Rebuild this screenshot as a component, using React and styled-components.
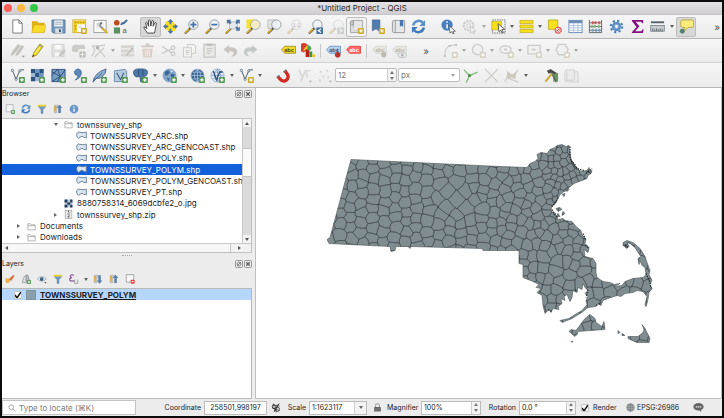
import React from "react";
import styled, { createGlobalStyle, css } from "styled-components";

const GlobalStyle = createGlobalStyle`
  *, *::before, *::after { box-sizing: border-box; }
  body { margin: 0; background: #000; }
  button, input, select { font: inherit; color: inherit; margin: 0; }
`;

/* ---------- icon drawings (16 x 16 grid) ---------- */

const NAVY = "#2c5480";
const PALE = "#cbccc9";

const plus = (fill = "#579a58", x = 9.5, y = 9.5) => (
  <>
    <rect x={x} y={y} width="6.4" height="6.4" rx="1" fill={fill} />
    <path d={`M${x + 3.2} ${y + 1.3}v3.8M${x + 1.3} ${y + 3.2}h3.8`} stroke="#fff" strokeWidth="1.300" />
  </>
);
const star = (fill = "#cba92b", x = 9.5, y = 9.5) => (
  <>
    <rect x={x} y={y} width="6.4" height="6.4" rx="1" fill={fill} />
    <path
      d={`M${x + 3.2} ${y + 1}v4.4M${x + 1} ${y + 3.2}h4.4M${x + 1.7} ${y + 1.7}l3 3M${x + 4.7} ${y + 1.7}l-3 3`}
      stroke="#fff"
      strokeWidth=".8"
    />
  </>
);
const lens = (
  <>
    <path d="M1 15.500l6-6" stroke="#454545" strokeWidth="2.200" />
    <path d="M1 15l4.400-4.400" stroke="#e5b928" strokeWidth="1.600" />
    <circle cx="10" cy="6" r="5" fill="#eef2f4" fillOpacity=".85" stroke="#8c9194" strokeWidth=".9" />
  </>
);
const vector = (c) => (
  <>
    <path d="M2.500 2.500l4 9.500 4-9.500q2-1 4.500-.5" fill="none" stroke={c} strokeWidth=".9" />
    <circle cx="2.500" cy="2.500" r="1.200" fill="#fff" stroke={c} strokeWidth=".7" />
    <circle cx="10.500" cy="3" r="1.200" fill="#fff" stroke={c} strokeWidth=".7" />
    <circle cx="6.500" cy="12" r="1.200" fill="#fff" stroke={c} strokeWidth=".7" />
  </>
);
const refresh = (
  <>
    <path d="M2.300 7a6 6 0 0 1 10.400-3" fill="none" stroke="#5b90cb" strokeWidth="2.600" />
    <path d="M15 1v6.500H8.800z" fill="#5b90cb" />
    <path d="M13.700 9a6 6 0 0 1-10.400 3" fill="none" stroke="#4179ba" strokeWidth="2.600" />
    <path d="M1 15V8.500h6.200z" fill="#4179ba" />
  </>
);
const funnel = (
  <>
    <path d="M2 4h12L9.500 9v6h-3V9z" fill="#6f9bc8" stroke="#4c6f93" strokeWidth=".7" />
    <rect x="1" y="1" width="14" height="3" rx="1" fill="#e9d130" />
  </>
);
const globe = (fill, line) => (
  <>
    <circle cx="8" cy="8" r="7" fill={fill} stroke={line} strokeWidth=".7" />
    <path d="M1.500 8h13M8 1.200v13.600M2.700 4.500h10.600M2.700 11.500h10.600M8 1.200q-7 6.800 0 13.600M8 1.200q7 6.800 0 13.600" fill="none" stroke={line} strokeWidth=".8" />
  </>
);
const label = (fill, line, ink) => (
  <>
    <path d="M4 3.500h11.500v7.500H4L.5 7.200z" fill={fill} stroke={line} strokeWidth=".8" />
    <text x="3.400" y="9.500" fontSize="6" fontWeight="700" fontFamily="Liberation Sans, sans-serif" fill={ink}>abc</text>
  </>
);

const ICONS = {
  newDoc: <path d="M3 1h6.500l3.500 3.500V15H3zM9.500 1v3.500H13" fill="#fff" stroke="#6c6c6c" strokeWidth=".9" />,
  folderOpen: (
    <>
      <path d="M1 2.500h5.500L8 4h6.500v10.500H1z" fill="#dcaf12" />
      <path d="M3.500 6.500H15.800L14 14.500H.8z" fill="#f9d92b" stroke="#dbb318" strokeWidth=".6" />
    </>
  ),
  save: (
    <>
      <path d="M1 1h14v14H2.500L1 13.500z" fill="#7396bd" stroke="#56738f" strokeWidth=".8" />
      <rect x="3.500" y="1.500" width="9" height="6.500" fill="#eef1f4" />
      <path d="M4.500 3.500h7M4.500 5.500h7" stroke="#9aa6b2" strokeWidth=".9" />
      <rect x="4.500" y="10" width="7.500" height="5" fill="#d8dde2" />
      <rect x="8.500" y="11" width="2" height="3" fill="#43566a" />
    </>
  ),
  newLayout: (
    <>
      <rect x="1" y="1" width="13.500" height="13.500" fill="#fff" stroke="#c8a92a" />
      <path d="M1.500 1.500h13v4H5.500v9h-4z" fill="#f0cb2c" />
      <path d="M6 3.500h1M9 3.500h1M12 3.500h1M3.500 3v1M3.500 7v1M3.500 10v1" stroke="#7c6919" />
      <path d="M7 7h4v3H7z" fill="#e2e2e2" />
      {star()}
    </>
  ),
  layoutManager: (
    <>
      <rect x="1" y="1.500" width="13" height="13" fill="#fff" stroke="#9a9d9f" />
      <path d="M3 3.500h9v7H3z" fill="#f0f1f2" />
      <path d="M5 5l7 7" stroke="#8f9496" strokeWidth="2" />
      <path d="M10 10l5.500 5" stroke="#d9b631" strokeWidth="2.400" />
      <path d="M9 3l1 1.500L8 7 6 5z" fill="#6d7275" />
      <path d="M3.500 5.500l3-2 1.500 2-2.500 2z" fill="#c9cdd0" />
    </>
  ),
  styleManager: (
    <>
      <circle cx="4" cy="4" r="3" fill="#c04c20" />
      <rect x="1" y="9" width="6.500" height="6.500" fill="#5a9162" />
      <path d="M9 6.500q0-2.500 2.500-2l3.500-3.500" fill="none" stroke="#436f9f" strokeWidth="2.200" />
      <text x="10" y="15" fontSize="8" fontFamily="Liberation Sans, sans-serif" fill="#555">a</text>
    </>
  ),
  hand: (
    <path
      d="M4.800 15L1 9.600q-.5-1.500 1-1.100l2.200 1.800L2.800 4q.6-1.400 1.700 0l1.500 3.800L5.800 1.500q.9-1.200 1.800 0l.7 6L9.500 2q1-1 1.700.3l-.4 5.400L12.800 4q1.200-.6 1.500.6l-1.200 6.400-.9 4z"
      fill="#fff" stroke="#333" strokeWidth=".9"
    />
  ),
  panSelection: (
    <>
      <path d="M2.500 2.500h9v9h-9z" fill="#f6df26" />
      <path d="M5 5h8v8H5z" fill="#f6df26" />
      <path d="M8 0l3 3.300H9v2.200H7V3.300H5zM8 16l3-3.300H9v-2.200H7v2.200H5zM0 8l3.300-3v2h2.200v2H3.300v2zM16 8l-3.300-3v2h-2.200v2h2.200v2z" fill="#4b739f" />
    </>
  ),
  zoomIn: <>{lens}<path d="M10 2.800v6.400M6.800 6h6.400" stroke="#3f74b0" strokeWidth="1.800" /></>,
  zoomOut: <>{lens}<path d="M6.800 6h6.400" stroke="#3f74b0" strokeWidth="1.800" /></>,
  zoomFull: (
    <>
      <path d="M1 15.500l6-6" stroke="#454545" strokeWidth="2" />
      <path d="M1 15l4.400-4.400" stroke="#e5b928" strokeWidth="1.500" />
      <rect x="5" y="3" width="8" height="7.500" fill="#e3e8ec" stroke="#a5abb0" strokeWidth=".7" />
      <path d="M2 .8h4.500L5.500 2.300 7 4 5.300 5.500 3.500 4 2 5.200zM15.800.8h-4.500l1.200 1.500L11 4l1.500 1.500L14.300 4l1.500 1.200zM15.800 12.500h-4.500l1.200-1.500L11 9.300l1.500-1.500 1.800 1.500 1.500-1.200z" fill="#4d739d" />
    </>
  ),
  zoomSelection: <><path d="M.5.500h8v9.500h-8z" fill="#f5e02a" />{lens}<circle cx="10" cy="6" r="4.500" fill="#f2ecc4" /></>,
  zoomLayer: <><path d="M1 1h8v9H1z" fill="#e3e4e4" stroke="#aaa" strokeWidth=".7" />{lens}</>,
  zoomNative: (
    <g opacity=".32">
      {lens}
      <text x="6" y="8.500" fontSize="6" fontFamily="Liberation Sans, sans-serif" fill="#333">1:1</text>
    </g>
  ),
  zoomLast: <>{lens}<path d="M9 9h7v7H9z" fill="#47719d" /><path d="M14 10.500l-3 2 3 2" fill="none" stroke="#fff" strokeWidth="1.300" /></>,
  zoomNext: <g opacity=".28">{lens}<path d="M9 9h7v7H9z" fill="#777" /><path d="M11 10.500l3 2-3 2" fill="none" stroke="#fff" strokeWidth="1.300" /></g>,
  newMapView: (
    <>
      <path d="M4.500 1.500h10v11h-10z" fill="#e5e6e5" stroke="#8f9394" strokeWidth=".8" />
      <path d="M4.500 1.500q-3.500 0-3.500 3t3.500 2z" fill="#c4c7c8" stroke="#8f9394" strokeWidth=".8" />
      <path d="M1.500 6v8.500h9" fill="#dcdedd" stroke="#8f9394" strokeWidth=".8" />
      {star()}
    </>
  ),
  newBookmark: <><path d="M2.500 1h8v12.500l-4-3-4 2z" fill="#507caf" stroke="#3c628c" strokeWidth=".7" />{star()}</>,
  bookmarks: (
    <>
      <path d="M1.500 3q0-1.500 2-1.500h11v13H3.500q-2 0-2-1.500z" fill="#e6e8e8" stroke="#8c9091" strokeWidth=".9" />
      <path d="M4.500 1.500v13" stroke="#8c9091" strokeWidth=".9" />
      <path d="M9.500 1H13v7.500L11.200 7 9.500 8.500z" fill="#4876ab" />
    </>
  ),
  refresh,
  identify: (
    <>
      <circle cx="6.500" cy="6.500" r="6" fill="#4a7fbe" />
      <path d="M6.500 5.500v4.500M6.500 2.500v1.600" stroke="#fff" strokeWidth="1.600" />
      <path d="M8.500 7l6.800 6-2.600.2 1.200 2.300-1.200.5-1.200-2.600-2 1.400z" fill="#fff" stroke="#333" strokeWidth=".7" />
    </>
  ),
  action: (
    <g opacity=".45">
      <circle cx="7" cy="7" r="5" fill="none" stroke="#a1a3a2" strokeWidth="2.400" strokeDasharray="2.400 1" />
      <circle cx="7" cy="7" r="2" fill="none" stroke="#a1a3a2" />
      <path d="M9 8l5.800 5-2.600.2 1.200 2.300-1.200.5-1.200-2.600-2 1.400z" fill="#fff" stroke="#777" strokeWidth=".7" />
    </g>
  ),
  select: (
    <>
      <rect x="1.500" y="1" width="13.500" height="14" fill="none" stroke="#555" strokeDasharray="1.500 1" strokeWidth=".9" />
      <path d="M.8 2.500h10.500v9H.8z" fill="#f6df15" stroke="#a99a1d" strokeWidth=".5" />
      <path d="M7.500 5l7 6-2.800.3 1.500 3-1.300.6-1.500-3-2 1.600z" fill="#fff" stroke="#333" strokeWidth=".8" />
    </>
  ),
  selectForm: <path d="M1 1.500h14v3.200H1zM1 6.400h14v3.200H1zM1 11.300h14v3.200H1z" fill="#f8e11a" stroke="#b8a21c" strokeWidth=".7" />,
  deselect: (
    <>
      <path d="M1.500 1h10v10h-10z" fill="#f8e11a" stroke="#a99315" strokeWidth=".7" />
      <circle cx="12" cy="12" r="3.800" fill="#df5f5f" />
      <circle cx="12" cy="12" r="2" fill="none" stroke="#fff" strokeWidth=".8" />
      <path d="M9.500 9.500l5 5" stroke="#fff" strokeWidth=".8" />
    </>
  ),
  attributes: (
    <>
      <rect x="1" y="1.500" width="14" height="13" fill="#fff" stroke="#668cb8" />
      <path d="M1 1.500h14v3H1z" fill="#668cb8" />
      <path d="M2 7h12M2 9.500h12M2 12h12M6 4v10.500M10.500 4v10.500" stroke="#9db7d4" strokeWidth=".8" />
    </>
  ),
  abacus: (
    <>
      <path d="M1.500 1v13.500h13V1M1.500 4h13M1.500 8h13M1.500 12h13" fill="none" stroke="#62696d" />
      <path d="M4 2.500h2v3H4zM7 2.500h2v3H7zM11 2.500h2v3h-2z" fill="#d25454" />
      <path d="M3 6.500h2v3H3zM6 6.500h2v3H6zM10.500 6.500h2v3h-2z" fill="#8dbb86" />
      <path d="M4 10.500h2v3H4zM7.500 10.500h2v3h-2zM11 10.500h2v3h-2z" fill="#7d9ec5" />
    </>
  ),
  gear: (
    <>
      <circle cx="8" cy="8" r="6" fill="none" stroke="#4c83c0" strokeWidth="2.400" strokeDasharray="2.300 2.410" />
      <circle cx="8" cy="8" r="4" fill="#7ba6d4" stroke="#4c83c0" strokeWidth="1.600" />
      <circle cx="8" cy="8" r="1.500" fill="#fff" />
    </>
  ),
  sigma: <path d="M2 1h12v3.500h-1L12 3H6l4 4.800L5.500 13H12l1.500-2h1l-.7 4H2v-1l5-5.500L2 2z" fill="#860f83" />,
  ruler: (
    <>
      <path d="M1 3.500h14" stroke="#54606c" strokeWidth="2" />
      <rect x=".8" y="7" width="14.400" height="6" fill="#c6ccd0" stroke="#6d767c" strokeWidth=".8" />
      <path d="M3 13v-3M5 13v-2M7 13v-3M9 13v-2M11 13v-3M13 13v-2" stroke="#4c5459" strokeWidth=".8" />
    </>
  ),
  mapTips: (
    <>
      <path d="M4 1h9.500q2.200 0 2.200 2v4q0 2-2.200 2H10l-5 4 1-4H4Q1.800 9 1.800 7V3q0-2 2.200-2z" fill="#f9ec7d" stroke="#b0a03a" strokeWidth=".9" />
      <circle cx="3.500" cy="13" r="2.600" fill="#56875b" />
      <path d="M1.500 13l2-2 1 4z" fill="#4c77a7" />
    </>
  ),

  pencils: <><path d="M.5 14L2 9.500 8.500 1l3 2-7 9zM5.500 14L7 10l5.500-8 2.500 2-6 8.500z" fill="#c4c2bf" /><path d="M12.500 13.500h3.500l-1.700 2z" fill="#999" /></>,
  pencil: (
    <>
      <path d="M2.500 15L4 10.500 10.500 1 14 3.500l-6.500 9z" fill="#f0db27" stroke="#907f20" strokeWidth=".8" />
      <path d="M2.500 15l.8-2.500 1.500 1.100z" fill="#333" />
      <path d="M5.500 11.500L12 2.500" stroke="#fbf4a0" />
      <path d="M9.800 2.200l3.500 2.500" stroke="#9b9b9b" strokeWidth="1.200" />
    </>
  ),
  saveEdits: <g opacity=".75"><path d="M1 1.500h13v13H1z" fill="#d9d9d7" stroke={PALE} /><path d="M4 2h7v5H4zM4 10h6v4.500H4z" fill="#fafafa" /><path d="M8 14.500l1-3 5-5 2 2-5 5z" fill="#b9bab8" /></g>,
  addPolygon: <g fill={PALE}><path d="M1 8q-1-6 4-6.500 5 1 8 0 3 2 2 5l-6 0-2 3-5 0z" /><rect x="9" y="9" width="6.500" height="6.500" rx="1" fill="#b9bbb7" /><path d="M12.200 10v4.500M10 12.200h4.500" stroke="#fff" /></g>,
  vertexTool: <><path d="M1 3h9l5-1M2 3l2 5-3 6M7 5l8 10M14 5L4 15" fill="none" stroke={PALE} strokeWidth="1.400" /><circle cx="7" cy="5" r="2" fill="#b6b7b5" /></>,
  multiEdit: <g opacity=".85"><path d="M1 2.500h14v3H1zM1 7h14v3H1zM1 11.500h14v3H1z" fill="#d2d0cc" /><path d="M5 14l8-10 2 1.500-8 9z" fill="#b3b3af" stroke="#f3f3f2" strokeWidth=".5" /></g>,
  trash: <g opacity=".9"><path d="M1.500 3.500h13M6 1.500h4" stroke="#cdc0bd" strokeWidth="1.800" /><path d="M2.500 6h11l-1 9.500h-9z" fill="#d8cbc8" /><path d="M6 7v7M8 7v7M10 7v7" stroke="#f1eceb" /></g>,
  scissors: <><path d="M1 3.500l10 7M1 11l11-5" stroke="#c8c9c7" strokeWidth="1.300" /><circle cx="13" cy="5" r="2" fill="none" stroke="#c8c9c7" strokeWidth="1.300" /><circle cx="12.800" cy="11.500" r="2" fill="none" stroke="#c8c9c7" strokeWidth="1.300" /></>,
  copy: <g fill="#f3f3f2" stroke={PALE} strokeWidth="1.100"><path d="M6 1.500h6l2.500 2V11H6z" /><path d="M1.500 5H10v10H1.500zM4 8h4M4 10h4M4 12h3" /></g>,
  paste: <><path d="M2 1.500h12V15H2z" fill="#e9e9e7" stroke="#c3c4c2" strokeWidth="1.200" /><path d="M5 .8h6V3H5z" fill="#b9bab8" /><path d="M5 6h6M5 8.500h6M5 11h4" stroke="#c3c4c2" /></>,
  undo: <path d="M6.500 2L.5 7l6 4.500V9q5-.5 5 2-.5 2.500-3 3.500 7-.5 6.500-5.500-.5-5-8.500-4.500z" fill="#c9c4bf" />,
  redo: <path d="M9.500 2l6 5-6 4.500V9q-5-.5-5 2 .5 2.500 3 3.500Q.5 14 1 9q.5-5 8.500-4.500z" fill="#c6cac6" />,
  labelYellow: label("#f5dc2b", "#8f8021", "#4a4208"),
  diagram: (
    <>
      <path d="M8 6a5 5 0 1 0-5 4z" fill="#d93c31" />
      <path d="M2 9q1-4 5-7l2 3z" fill="#e9c72d" />
      <path d="M5 7h4v8H5z" fill="#b9201c" />
      <path d="M9 9h3v6H9z" fill="#3e9a42" />
      <path d="M7 2a4.500 4.500 0 0 1 4 5L7 8z" fill="#4ca147" />
      <path d="M12 12h3v3h-3z" fill="#e8c62a" />
    </>
  ),
  labelPin: <>{label("#b7d3f2", "#5c86b8", "#3d5875")}<circle cx="12.500" cy="12.500" r="3" fill="#b83232" /><path d="M12.500 9.500V6" stroke="#555" /></>,
  labelRed: label("#fa6a62", "#e03a34", "#fff"),
  labelGreyPin: <>{label("#e6e6e2", "#d0d0cb", "#b6b6b1")}<circle cx="12.500" cy="12.500" r="2.800" fill="#bcbab5" /></>,
  labelGreyEye: <>{label("#e6e6e2", "#d0d0cb", "#b6b6b1")}<ellipse cx="11" cy="13" rx="4.500" ry="2.400" fill="#eee" stroke="#b5bbc0" /><circle cx="11" cy="13" r="1.400" fill="#aab3bb" /></>,
  curve: <><path d="M2 14q0-9 5-11l7-1" fill="none" stroke={PALE} strokeWidth="1.200" /><path d="M1 13h2v2H1zM6 2h2v2H6zM13 1h2v2h-2z" fill="#bbb" />{star("#d3d0c2")}</>,
  circle: <><circle cx="7" cy="7" r="5.500" fill="#f0f0f0" stroke={PALE} strokeWidth="1.400" />{star("#d3d0c2")}</>,
  ellipse: <><ellipse cx="7" cy="7" rx="6" ry="4" fill="#f0f0f0" stroke={PALE} strokeWidth="1.400" /><circle cx="7" cy="7" r="1.500" fill={PALE} />{star("#d3d0c2")}</>,
  rectangle: <><path d="M1 2.500h13v9H1z" fill="#f0f0f0" stroke={PALE} strokeWidth="1.400" /><path d="M5 6h4v2H5z" fill={PALE} />{star("#d3d0c2")}</>,
  polygon: <><path d="M4 1.500h7l3 5.500-3 5.500H4L1 7z" fill="#f0f0f0" stroke={PALE} strokeWidth="1.400" />{star("#d3d0c2")}</>,

  addVector: <>{vector("#35495d")}{plus()}</>,
  addRaster: <><path d="M1 1h13.500v13H1z" fill="#9cb6d4" /><path d="M1 1h4.500v4.300H1zM10 1h4.500v4.300H10zM5.500 5.300H10v4.400H5.500zM1 9.700h4.500V14H1z" fill={NAVY} /><path d="M10 5.300h4.500v4.400H10zM5.500 1H10v4.300H5.500z" fill="#6d93bf" />{plus()}</>,
  addMesh: <><path d="M1 1.500h14v13H1z" fill="#789ec6" stroke={NAVY} /><path d="M1 8l6-6.500L10 9l5-7M7 14.500L10 9l5 4M1 14.500L10 9M1 4l9 5" fill="none" stroke="#234567" strokeWidth=".9" />{plus()}</>,
  addText: <><path d="M4 2a3.600 3.600 0 0 1 6 3q0 5-6.500 8Q7 9 6 8 2.500 7.500 2.500 4.500 2.500 3 4 2z" fill="#5a86b8" stroke="#345f8f" strokeWidth=".7" />{plus()}</>,
  addSpatialite: <><path d="M15 1q.5 5-5 9-3 1.500-6 1L1 15Q2.500 5 15 1z" fill="#8fb0d3" stroke="#395f88" strokeWidth=".9" /><path d="M2 14l9-9" stroke="#395f88" strokeWidth=".9" />{plus()}</>,
  addVirtual: <><path d="M1.500 3L13 1.500l1.500 2V14.500h-13z" fill="#b5cbe2" stroke="#6d8aaa" /><path d="M4 5l4 7.500L11.500 5" fill="none" stroke="#3b556f" strokeWidth="1.100" />{plus()}</>,
  addPostgis: <><path d="M.5 5q0-4 5.500-4h4q5.500 0 5.500 4-1 4-3.500 4l-1 5.500q-2 1-3 0L7.500 9Q4 10 2.500 9 .5 7 .5 5z" fill="#4e78a7" stroke="#284d76" strokeWidth=".8" /><path d="M6 2v6M10.500 2v6" stroke="#284d76" />{plus()}</>,
  addWms: <>{globe("#86a9cf", "#7d9fc4")}<path d="M2.500 4.500l4-2.500 2 3-3 3-2 0zM9.500 6l4 0.500-1 4-3-1zM5 10l3 1-1 3z" fill="#3d6896" /><path d="M9 2l3 1.500-2 1.500z" fill="#dfeaf5" />{plus()}</>,
  addWcs: <>{globe("#3c6795", "#a9c3de")}{plus()}</>,
  addWfs: <>{globe("#e3ecf6", "#7d9fc4")}<path d="M3.500 3.500l3.500 9L10.500 4l3 .5" fill="none" stroke="#2c4f78" strokeWidth="1.400" />{plus()}</>,
  newVector: <>{vector("#35495d")}{star()}</>,
  magnet: (
    <>
      <path d="M2 9l2.500 3a4.500 4.500 0 0 0 7.500-5.500L9.500 3" fill="none" stroke="#d12b24" strokeWidth="3.500" />
      <path d="M.8 10.200l2.800-2.400M8 4.400l3-2.400" stroke="#777" strokeWidth="1.800" />
    </>
  ),
  snapAll: <><path d="M2 2l4 8 3-7h5M6 10l-2 4M10 5l1 5" fill="none" stroke="#d6d6d4" strokeWidth="1.700" /><path d="M12.500 13.500h3.500l-1.700 2z" fill="#aaa" /></>,
  snapVertex: <><path d="M3 3h2v2H3zM10 2h2v2h-2zM6 8h2v2H6zM11 9h2v2h-2zM2 12h2v2H2z" fill="#d2d2d0" /><path d="M12.500 13.500h3.500l-1.700 2z" fill="#aaa" /></>,
  topology: <><path d="M1 2l6 6 8.500-3.500M7 8l-3.500 7.500" fill="none" stroke="#7fb57a" strokeWidth="1.400" /><circle cx="7" cy="8" r="1.700" fill="#4b8b49" /></>,
  intersection: <path d="M1 1l14 14M15 1L1 15" stroke={PALE} strokeWidth="1.300" />,
  tracing: <><path d="M1 15L5 5M10 9l5-7M5 11l10 4" fill="none" stroke={PALE} strokeWidth="1.300" /><path d="M3 3l5.500 4L13 4l-1 8-4-2-4 2z" fill="#cbc8bc" /></>,
  hammer: (
    <>
      <path d="M10 4l5 1.500V15l-3-2-2 2.500z" fill="#6b9263" />
      <path d="M8 5l5 10" stroke="#55694f" strokeWidth="1.600" />
      <path d="M1.500 14.500L8.500 6" stroke="#c9a530" strokeWidth="2" />
      <path d="M3 3l4-2 6 4-2 2-3-2-3 1z" fill="#4a4d48" />
    </>
  ),
  mapGrey: <g opacity=".45"><path d="M3 2h8v11H3zM11 4h4v11H5" fill="#e6e6e5" stroke="#a9aaa9" /><path d="M3 2Q1 2 1 4v10h4" fill="none" stroke="#a9aaa9" /></g>,

  addItem: <><path d="M2 1h11v11.500H2z" fill="#f6f6f6" stroke="#9b9fa0" />{plus()}</>,
  funnel,
  collapse: <><path d="M2 2h6v3H2zM2 6h4v8H2z" fill="#dfe1e2" stroke="#8a8c8c" strokeWidth=".8" /><path d="M2 3h3v9H2z" fill="#e4ac36" /><path d="M10.500 1L15 6h-2.500v8.500h-4V6H6z" fill="#5a7ea8" /></>,
  expand: <><path d="M2 2h6v3H2zM2 6h4v8H2z" fill="#dfe1e2" stroke="#8a8c8c" strokeWidth=".8" /><path d="M2 3h3v9H2z" fill="#e4ac36" /><path d="M10.500 15.500l4.500-5h-2.500V2h-4v8.500H6z" fill="#5a7ea8" /></>,
  info: <><circle cx="8" cy="8" r="7" fill="#6a96c9" /><path d="M8 7v5.500M8 3.500v2" stroke="#fff" strokeWidth="2" /></>,
  brush: <><path d="M.5 6.500l6 1.500 2 4.500q-5 3-7 1z" fill="#f0a445" /><path d="M6 8l4 3 5.500-8.500-2-1z" fill="#d3703f" /><path d="M2 8l4 5" stroke="#f9d54b" strokeWidth="1.400" /></>,
  addGroup: <><path d="M2 14L5 4l4-2v12z" fill="#dcdfe0" stroke="#83898c" /><path d="M8 2h3l3 10H8z" fill="#b7bdc0" stroke="#777c80" />{plus()}</>,
  eye: <><path d="M.5 8q7-8 14.500 0-7.500 7-14.500 0z" fill="#e3ebf1" stroke="#8a95a0" /><circle cx="7.500" cy="8" r="3" fill="#3d5f82" /><path d="M11.500 13h4l-2 2z" fill="#333" /></>,
  expression: <><path d="M8 2Q2 0 2 4q0 2 3 2-4 0-4 3t7 2" fill="none" stroke="#7c4e8d" strokeWidth="1.700" /><path d="M9 9v6h5V9" fill="none" stroke="#9a9c9c" strokeWidth="1.500" /></>,
  remove: <><path d="M2 1h12v12H2z" fill="#f6f6f6" stroke="#7c8082" /><rect x="9" y="9" width="6.500" height="6.500" rx="1.500" fill="#e0403f" /><path d="M10.500 12.200h3.500" stroke="#fff" strokeWidth="1.500" /></>,
  float: <><rect x="1" y="1" width="14" height="14" rx="2" fill="none" stroke="#6a6a6a" strokeWidth="1.300" /><circle cx="8" cy="8" r="3.800" fill="none" stroke="#666" strokeWidth="1.500" /><path d="M4 12l8-8" stroke="#666" strokeWidth="1.500" /></>,
  close: <><rect x="1" y="1" width="14" height="14" rx="2" fill="none" stroke="#6a6a6a" strokeWidth="1.300" /><path d="M4.500 4.500l7 7M11.500 4.500l-7 7" stroke="#555" strokeWidth="2.200" /></>,
  folder: <path d="M1.500 14V3h5l1.500 2h6.500v9zM1.500 6.500h13" fill="#fafafa" stroke="#999" strokeWidth="1.200" />,
  polygonLayer: <path d="M2 11Q-1 4 4 3l6 1 5-1v8.500l-4-1q-2-3-5 0-3 3-4 .5z" fill="#dbe5ef" stroke="#637c96" strokeWidth="1.300" />,
  image: <><path d="M1 1h14v14H1z" fill="#b9c8d8" /><path d="M1 1h5v5H1zM11 1h4v5h-4zM6 6h5v4H6zM1 10h5v5H1zM11 10h4v5h-4z" fill="#203a58" /></>,
  zip: <><rect x="2" y="1" width="12" height="14" fill="#ececec" stroke="#8f8f8f" /><path d="M7 1.500h2v2H7zM8 4h2v2H8zM6 6h2v2H6zM8 8h2v2H8zM6.500 10.500h3v3h-3z" fill="#666" /></>,
  search: <><circle cx="6.500" cy="6.500" r="4.800" fill="none" stroke="#8a8a8a" strokeWidth="1.400" /><path d="M10 10l5 5" stroke="#8a8a8a" strokeWidth="1.500" /></>,
  extents: <><path d="M2 3l12 2M2 8l12 4M4 1l2 12M10 2L8 15" stroke="#555" strokeWidth="1.200" /><circle cx="5" cy="6" r="3" fill="none" stroke="#333" strokeWidth="1.500" /><circle cx="10" cy="10" r="3.500" fill="none" stroke="#444" strokeWidth="1.500" /><path d="M13 1L5 14" stroke="#333" strokeWidth="1.500" /></>,
  lock: <><path d="M4.500 8V5a3.500 3.500 0 0 1 7 0v3" fill="none" stroke="#9b9b9b" strokeWidth="1.800" /><rect x="2" y="7" width="12" height="8" rx="1" fill="#666" /><path d="M2.500 10h11M2.500 12.500h11" stroke="#888" /></>,
  globeGrey: globe("#b2b5b6", "#666a6c"),
  bubble: <><ellipse cx="8" cy="7" rx="7.500" ry="5.500" fill="#666" /><path d="M8 11l4 4-.5-5z" fill="#666" /><path d="M4 7h2M7 7h2M10 7h2" stroke="#eee" strokeWidth="1.700" /></>,
};

const Svg = styled.svg`
  display: block;
  flex: none;
  width: ${(p) => p.$size}px;
  height: ${(p) => p.$size}px;
`;
const Icon = ({ name, size = 15 }) => (
  <Svg $size={size} viewBox="0 0 16 16" aria-hidden="true">{ICONS[name]}</Svg>
);

/* ---------- window ---------- */

const Window = styled.div`
  min-height: 100vh;
  display: flex;
  flex-direction: column;
  border: 2px solid #0b0b0b;
  background: #ececec;
  color: #1c1c1c;
  font-family: Inter, "Liberation Sans", sans-serif;
  font-size: 8px;
  line-height: 10px;
`;
const TitleBar = styled.header`
  height: 13px;
  flex: none;
  display: grid;
  grid-template-columns: 1fr auto 1fr;
  align-items: center;
  background: linear-gradient(#e4e2e4, #d0ced0);
  border-bottom: 1px solid #c6c4c6;
`;
const Title = styled.h1`
  margin: 0;
  font-size: 8px;
  line-height: 12px;
  font-weight: 400;
  color: #2d2d2d;
`;
const Lights = styled.div`
  display: flex;
  gap: 5px;
  padding-left: 2px;
`;
const Light = styled.button`
  width: 8px;
  height: 8px;
  padding: 0;
  border: 0;
  border-radius: 50%;
  background: ${(p) => p.$color};
`;

const Toolbar = styled.div`
  height: ${(p) => (p.$tall ? 25 : 24)}px;
  flex: none;
  display: flex;
  align-items: center;
  background: linear-gradient(#f6f6f6, #ebebeb);
  border-bottom: 1px solid ${(p) => (p.$strong ? "#b5b5b5" : "#d2d2d2")};
`;
const Handle = styled.span`
  width: ${(p) => p.$w || 9}px;
  height: 16px;
  flex: none;
  background: radial-gradient(circle, #c2c2c2 35%, transparent 45%) center / 2px 2px;
  background-clip: content-box;
  padding: 0 ${(p) => (p.$w === 5 ? "1px" : "3px")};
`;
const Group = styled.div`
  width: ${(p) => p.$w}px;
  flex: none;
  display: flex;
`;
const Tool = styled.button`
  flex: 1;
  height: 20px;
  min-width: 0;
  padding: 0;
  display: grid;
  place-items: center;
  border: 1px solid transparent;
  border-radius: 2px;
  background: none;
  ${(p) => p.$on && css`
    background: ${p.$on === "light" ? "#f3f3f3" : "#d7d7d7"};
    border-color: #bcbcbc;
  `}
`;
const MenuButton = styled.button`
  width: 8px;
  height: 16px;
  flex: none;
  padding: 0;
  display: grid;
  place-items: center;
  border: 0;
  background: none;
  &::after {
    content: "";
    border: 2px solid transparent;
    border-top: 3px solid ${(p) => (p.$off ? "#a5a5a5" : "#606060")};
    border-bottom: 0;
  }
`;
const Divider = styled.span`
  width: 1px;
  height: 14px;
  margin: 0 2px 0 1px;
  flex: none;
  background: #c9c9c9;
`;
const Gap = styled.span`
  width: ${(p) => p.$w}px;
  flex: none;
`;
const Push = styled.span`
  flex: 1;
`;
const More = styled.button`
  width: 21px;
  padding: 0 2px 0 0;
  border: 0;
  background: none;
  text-align: right;
  font-size: 10px;
  color: #555;
`;

const Tools = ({ w, items, on = {} }) => (
  <Group $w={w}>
    {items.map((n) => (
      <Tool key={n} $on={on[n]} aria-label={n}><Icon name={n} /></Tool>
    ))}
  </Group>
);
const Split = ({ name, off }) => (
  <>
    <Tools w={20} items={[name]} />
    <MenuButton $off={off} aria-label={`${name} menu`} />
  </>
);

/* ---------- fields ---------- */

const Field = styled.div`
  width: ${(p) => p.$w}px;
  height: 14px;
  flex: none;
  display: flex;
  align-items: stretch;
  background: #fff;
  border: 1px solid #bdbdbd;
  border-radius: ${(p) => (p.$muted ? 2 : 0)}px;
  color: ${(p) => (p.$muted ? "#777" : "#1c1c1c")};
`;
const TextInput = styled.input`
  flex: 1;
  min-width: 0;
  width: 100%;
  padding: 0 2px;
  border: 0;
  outline: 0;
  background: none;
  text-align: ${(p) => (p.$center ? "center" : "left")};
  &::placeholder { color: #7b7b7b; opacity: 1; }
`;
const Steps = styled.div`
  width: 9px;
  flex: none;
  display: flex;
  flex-direction: column;
  border-left: 1px solid #cfcfcf;
  background: #f3f3f3;
`;
const Step = styled.button`
  flex: 1;
  padding: 0;
  display: grid;
  place-items: center;
  border: 0;
  background: none;
  &::after {
    content: "";
    border: 2px solid transparent;
    ${(p) => (p.$up ? "border-bottom: 3px solid #777; border-top: 0;" : "border-top: 3px solid #777; border-bottom: 0;")}
  }
`;
const Select = styled.select`
  flex: 1;
  min-width: 0;
  padding: 0 2px;
  border: 0;
  appearance: none;
  background: none;
`;
const Caret = styled.span`
  width: 12px;
  flex: none;
  display: grid;
  place-items: center;
  pointer-events: none;
  border-left: ${(p) => (p.$plain ? "0" : "1px solid #cfcfcf")};
  background: ${(p) => (p.$plain ? "none" : "#f3f3f3")};
  &::after {
    content: "";
    border: 2px solid transparent;
    border-top: 3px solid ${(p) => (p.$plain ? "#a5a5a5" : "#666")};
    border-bottom: 0;
  }
`;
const Spin = ({ w, label: l, value, muted }) => (
  <Field $w={w} $muted={muted}>
    <TextInput aria-label={l} defaultValue={value} />
    <Steps>
      <Step $up aria-label={`Increase ${l}`} />
      <Step aria-label={`Decrease ${l}`} />
    </Steps>
  </Field>
);
const CheckBox = styled.input`
  appearance: none;
  width: 8px;
  height: 8px;
  margin: 0;
  flex: none;
  border: 1px solid #c4c4c4;
  border-radius: 1px;
  background: #fff;
  &:checked {
    background: #fff url("data:image/svg+xml,%3Csvg xmlns='http://www.w3.org/2000/svg' viewBox='0 0 8 8'%3E%3Cpath d='M1 4l2 3 4-6' fill='none' stroke='%23111' stroke-width='1.500'/%3E%3C/svg%3E") center / 8px 8px;
  }
`;

/* ---------- docks ---------- */

const Body = styled.main`
  flex: 1;
  min-height: 0;
  display: flex;
`;
const Docks = styled.aside`
  width: 250px;
  flex: none;
  display: flex;
  flex-direction: column;
`;
const Dock = styled.section`
  display: flex;
  flex-direction: column;
  flex: ${(p) => (p.$grow ? "1" : "none")};
`;
const DockHead = styled.div`
  height: 12px;
  display: flex;
  align-items: center;
  gap: 1px;
`;
const DockTitle = styled.h2`
  margin: 0;
  flex: 1;
  font-size: 7px;
  font-weight: 400;
`;
const DockButton = styled.button`
  padding: 0;
  border: 0;
  background: none;
`;
const DockTools = styled.div`
  height: 18px;
  display: flex;
  align-items: center;
`;
const SmallTool = styled.button`
  width: 16px;
  height: 16px;
  padding: 0;
  display: grid;
  place-items: center;
  border: 0;
  background: none;
`;
const TreeBox = styled.div`
  display: grid;
  grid-template-columns: 1fr 9px;
  border: 1px solid #c0c0c0;
  border-left: 0;
  background: #fff;
`;
const Tree = styled.ul`
  height: 124px;
  margin: 0;
  padding: 0;
  min-width: 0;
  display: flex;
  flex-direction: column;
  list-style: none;
  overflow: hidden;
`;
const TreeRow = styled.li`
  flex: 1;
  min-height: 0;
  display: flex;
  align-items: center;
  padding-left: ${(p) => p.$indent}px;
  white-space: nowrap;
  ${(p) => p.$selected && "background: #1261da; color: #fff;"}
`;
const Twisty = styled.span`
  width: 10px;
  flex: none;
  &::after {
    content: "";
    display: ${(p) => (p.$state ? "block" : "none")};
    width: 0;
    border: 2px solid transparent;
    ${(p) => (p.$state === "open" ? "border-top: 3px solid #666; border-bottom: 0;" : "border-left: 3px solid #666; border-right: 0;")}
  }
`;
const IconCell = styled.span`
  width: ${(p) => (p.$wide ? 14 : 13)}px;
  flex: none;
`;
const VScroll = styled.div`
  display: flex;
  flex-direction: column;
  background: #dadada;
  border-left: 1px solid #c8c8c8;
`;
const HScroll = styled.div`
  grid-column: 1 / -1;
  height: 9px;
  display: flex;
  background: #f1f1f1;
  border-top: 1px solid #c8c8c8;
`;
const ARROWS = {
  up: "border-bottom: 3px solid #555; border-top: 0;",
  down: "border-top: 3px solid #555; border-bottom: 0;",
  left: "border-right: 3px solid #555; border-left: 0;",
  right: "border-left: 3px solid #555; border-right: 0;",
};
const ScrollArrow = styled.button`
  width: 8px;
  height: 8px;
  flex: none;
  padding: 0;
  display: grid;
  place-items: center;
  border: 0;
  background: #f4f4f4;
  &::after {
    content: "";
    border: 2px solid transparent;
    ${(p) => ARROWS[p.$dir]}
  }
`;
const Track = styled.span`
  flex: ${(p) => p.$grow};
  ${(p) => p.$thumb && "background: #fafafa; border: solid #c4c4c4; border-width: 1px 0;"}
`;
const HThumb = styled.span`
  flex: 1;
  background: #f7f7f7;
  border-right: 1px solid #c4c4c4;
  margin-right: 4px;
`;
const Splitter = styled.div`
  height: 5px;
  display: grid;
  place-items: center;
  &::after {
    content: "";
    width: 10px;
    border-top: 1px dotted #aaa;
  }
`;
const LayerList = styled.ul`
  flex: 1;
  margin: 0;
  padding: 0;
  list-style: none;
  background: #fff;
  border: 1px solid #b8b8b8;
  border-left: 0;
`;
const LayerRow = styled.li`
  height: 11px;
  background: #b5d6fe;
`;
const LayerLabel = styled.label`
  height: 11px;
  display: flex;
  align-items: center;
  gap: 4px;
  padding-left: 12px;
  font-weight: 700;
`;
const Swatch = styled.span`
  width: 10px;
  height: 10px;
  background: #8ba0ae;
  border: 1px solid #8294a0;
`;
const LayerName = styled.span`
  text-decoration: underline;
`;

const TREE = [
  { t: "townssurvey_shp", indent: 52, state: "open", icon: "folder" },
  { t: "TOWNSSURVEY_ARC.shp", indent: 64, icon: "polygonLayer", wide: true },
  { t: "TOWNSSURVEY_ARC_GENCOAST.shp", indent: 64, icon: "polygonLayer", wide: true },
  { t: "TOWNSSURVEY_POLY.shp", indent: 64, icon: "polygonLayer", wide: true },
  { t: "TOWNSSURVEY_POLYM.shp", indent: 64, icon: "polygonLayer", wide: true, selected: true },
  { t: "TOWNSSURVEY_POLYM_GENCOAST.shp", indent: 64, icon: "polygonLayer", wide: true },
  { t: "TOWNSSURVEY_PT.shp", indent: 64, icon: "polygonLayer", wide: true },
  { t: "8880758314_6069dcbfe2_o.jpg", indent: 52, icon: "image" },
  { t: "townssurvey_shp.zip", indent: 52, state: "closed", icon: "zip" },
  { t: "Documents", indent: 15, state: "closed", icon: "folder" },
  { t: "Downloads", indent: 15, state: "closed", icon: "folder" },
];

const DockHeader = ({ title }) => (
  <DockHead>
    <DockTitle>{title}</DockTitle>
    <DockButton aria-label={`Float ${title}`}><Icon name="float" size={8} /></DockButton>
    <DockButton aria-label={`Close ${title}`}><Icon name="close" size={8} /></DockButton>
  </DockHead>
);

/* ---------- map ---------- */

const Canvas = styled.div`
  flex: 1;
  min-width: 0;
  margin-left: 3px;
  display: flex;
  background: #fff;
  border: 1px solid #c0c0c0;
  border-top: 0;
`;
const MapSvg = styled.svg`
  display: block;
  flex: 1;
  min-width: 0;
  width: 100%;
`;

const MAINLAND =
  "M351 159L500 166L527 167L530 163L535 161L538 158L537 154L541 152L547 153L550 149L555 147L557 145L562 144L566 146L569 145L570 152L571 158L573 163L577 168L581 171L587 170L589 167L590 171L592 170L591 173L588 175L587 178L582 180L574 183L569 187L567 190L564 191L560 194L558 198L556 202L552 206L551 209L553 213L557 216L558 219L563 218L565 220L572 221L576 226L581 230L582 234L586 239L585 243L589 247L588 252L584 249L585 256L593 258L596 263L596 272L597 277L603 281L610 282L614 284L620 283L614 286L622 285L625 281L633 278L643 277L646 274L645 267L642 265L640 260L639 264L638 258L641 256L638 252L635 247L630 243L627 242L629 246L627 248L623 245L623 242L627 240L633 242L640 248L645 256L647 262L650 270L649 274L652 280L650 284L652 288L649 292L648 299L646 306L645 304L647 296L643 291L637 290L633 292L625 293L621 296L617 295L608 298L603 300L601 305L598 303L596 306L588 307L583 311L580 313L572 318L562 322L560 320L569 318L575 314L582 310L587 304L586 300L588 296L585 293L588 290L585 287L583 283L582 289L578 287L577 292L573 290L572 297L570 301L567 294L564 296L565 300L561 298L562 303L558 306L559 309L553 308L551 312L549 309L545 313L543 305L542 295L537 292L541 288L536 287L539 284L533 281L523 277L523 264L519 263L519 250L500 250L483 250L482 248L411 246L410 248L408 246L396 246L395 250L391 251L390 246L329 243L327 239L330 237Z";
const ISLANDS =
  "M590 314L595 318L596 322L602 326L604 321L605 329L590 330L578 331L577 334L575 336L569 331L571 329L576 330L582 322L585 318Z" +
  "M642 324L645 328L647 332L650 338L649 342L637 342L628 338L628 336L638 336L643 332L644 329Z" +
  "M618 330L620 332L618 333ZM622 333L625 335L622 335ZM571 341L573 341L572 342ZM562 194L565 193L564 196ZM566 188L569 189L567 191ZM556 208L560 207L562 209L558 211ZM563 211L565 213L562 215ZM553 212L556 213L554 215ZM558 213L560 216L557 216Z";

const mulberry = (seed) => () => {
  seed = (seed + 0x6d2b79f5) | 0;
  let t = Math.imul(seed ^ (seed >>> 15), 1 | seed);
  t = (t + Math.imul(t ^ (t >>> 7), 61 | t)) ^ t;
  return ((t ^ (t >>> 14)) >>> 0) / 4294967296;
};

/* The wide diagonal towns around the central reservoir. */
const isReservoir = (x, y) => Math.abs(x - 456) + Math.abs(y - 198) < 27;

/* Town seeds: squarish survey towns in the west, scattered small ones in the east. */
const townSeeds = () => {
  const rnd = mulberry(42);
  const pts = [];
  for (let u = -2; u <= 2; u++) {
    for (let v = -2; v <= 2; v++) {
      const x = 456 + (u - v) * 10;
      const y = 198 + (u + v) * 9;
      if (isReservoir(x, y)) pts.push([x + rnd(), y + rnd()]);
    }
  }
  for (let col = 0; col < 17; col++) {
    const drop = rnd() * 8;
    for (let row = 0; row < 12; row++) {
      const x = 318 + col * 11 + (rnd() - 0.5) * 5;
      const y = 146 + drop + row * 10 + (rnd() - 0.5) * 5;
      if (x < 498 && !isReservoir(x, y)) pts.push([x, y]);
    }
  }
  for (let i = 0; i < 9000; i++) {
    const x = 495 + rnd() * 163;
    const y = 140 + rnd() * 206;
    const r = x > 548 && y < 222 ? 4.5 : y > 250 ? 7.5 : 6.2;
    if (pts.every(([a, b]) => Math.max(Math.abs(a - x), Math.abs(b - y)) > r)) pts.push([x, y]);
  }
  return pts;
};

/* Voronoi cell of one seed, cut from a square by its neighbours' bisectors. */
const cellOf = ([x, y], pts) => {
  let poly = [[x - 25, y - 25], [x + 25, y - 25], [x + 25, y + 25], [x - 25, y + 25]];
  for (const [a, b] of pts) {
    const dx = a - x;
    const dy = b - y;
    if ((!dx && !dy) || dx * dx + dy * dy > 2500) continue;
    const lim = (a * a + b * b - x * x - y * y) / 2;
    const side = (p) => p[0] * dx + p[1] * dy - lim;
    const next = [];
    poly.forEach((p, i) => {
      const q = poly[(i + 1) % poly.length];
      const sp = side(p);
      const sq = side(q);
      if (sp <= 0) next.push(p);
      if ((sp < 0 && sq > 0) || (sp > 0 && sq < 0)) {
        const t = sp / (sp - sq);
        next.push([p[0] + (q[0] - p[0]) * t, p[1] + (q[1] - p[1]) * t]);
      }
    });
    poly = next;
  }
  return poly;
};

const TOWNS = (() => {
  const pts = townSeeds();
  return pts
    .map((s) => {
      const poly = cellOf(s, pts);
      return poly
        .map((p, i) => {
          const q = poly[(i + 1) % poly.length];
          const mx = (p[0] + q[0]) / 2;
          const my = (p[1] + q[1]) / 2;
          const bx = mx + Math.sin(mx * 7 + my * 3) * 0.8;
          const by = my + Math.cos(mx * 5 - my * 4) * 0.8;
          return `${i ? "L" : "M"}${p[0].toFixed(1)} ${p[1].toFixed(1)}L${bx.toFixed(1)} ${by.toFixed(1)}`;
        })
        .join("") + "Z";
    })
    .join("");
})();

const TownMap = () => (
  <MapSvg viewBox="256 88 465 309" role="img" aria-label="Map of Massachusetts towns">
    <defs>
      <clipPath id="land"><path d={MAINLAND + ISLANDS} /></clipPath>
    </defs>
    <path d={MAINLAND + ISLANDS} fill="#7f8d90" />
    <path d={TOWNS} clipPath="url(#land)" fill="none" stroke="#343b3d" strokeWidth=".4" />
    <path d={MAINLAND + ISLANDS} fill="none" stroke="#4b5557" strokeWidth=".6" strokeLinejoin="round" />
    <path
      d="M570 146v12l4 7 5 4 5 1M571 160l4 4 2 5M586 173l4-3 2-2M558 197l-3 6-3 3M552 209l3 5 3 3M583 233l3 7M585 245l3 2M646 273l4 9 1 6M548 309l4 2M588 289l-2 8M596 305l5-3M625 244l3 3"
      fill="none" stroke="#23292b" strokeWidth="1.200" strokeDasharray="1.500 1"
    />
  </MapSvg>
);

/* ---------- status bar ---------- */

const StatusBar = styled.footer`
  height: 17px;
  flex: none;
  display: flex;
  align-items: center;
  font-size: 7px;
`;
const Locator = styled.label`
  width: 134px;
  height: 15px;
  flex: none;
  display: flex;
  align-items: center;
  gap: 1px;
  padding-left: 5px;
  background: #fff;
  border: 1px solid #c4c4c4;
  font-size: 8px;
`;
const Caption = styled.label`
  width: ${(p) => p.$w}px;
  flex: none;
  padding-right: 3px;
  text-align: right;
  white-space: nowrap;
`;
const StatusButton = styled.button`
  width: ${(p) => p.$w}px;
  flex: none;
  display: flex;
  align-items: center;
  justify-content: center;
  gap: 2px;
  padding: 0;
  border: 0;
  background: none;
  white-space: nowrap;
`;
const CheckLabel = styled.label`
  display: flex;
  align-items: center;
  gap: 4px;
  margin-left: 5px;
`;

export default function App() {
  return (
    <>
      <GlobalStyle />
      <Window>
        <TitleBar>
          <Lights>
            <Light $color="#fb5f57" aria-label="Close" />
            <Light $color="#fdbc40" aria-label="Minimize" />
            <Light $color="#33c748" aria-label="Zoom" />
          </Lights>
          <Title>*Untitled Project - QGIS</Title>
        </TitleBar>

        <Toolbar $strong>
          <Handle $w={5} />
          <Tools w={124} items={["newDoc", "folderOpen", "save", "newLayout", "layoutManager", "styleManager"]} />
          <Handle $w={9} />
          <Tools
            w={289}
            on={{ hand: "dark", newMapView: "light" }}
            items={["hand", "panSelection", "zoomIn", "zoomOut", "zoomFull", "zoomSelection", "zoomLayer", "zoomNative", "zoomLast", "zoomNext", "newMapView", "newBookmark", "bookmarks", "refresh"]}
          />
          <Handle $w={9} />
          <Tools w={42} items={["identify", "action"]} />
          <MenuButton $off aria-label="Actions menu" />
          <Split name="select" />
          <Split name="selectForm" />
          <Tools w={124} items={["deselect", "attributes", "abacus", "gear", "sigma", "ruler"]} />
          <MenuButton aria-label="Measure menu" />
          <Tools w={20} items={["mapTips"]} on={{ mapTips: "dark" }} />
          <Push />
          <More aria-label="More tools">»</More>
        </Toolbar>

        <Toolbar>
          <Handle $w={5} />
          <Tools w={102} items={["pencils", "pencil", "saveEdits", "addPolygon", "vertexTool"]} />
          <MenuButton $off aria-label="Vertex tool menu" />
          <Tools w={144} items={["multiEdit", "trash", "scissors", "copy", "paste", "undo", "redo"]} />
          <Gap $w={8} />
          <Handle $w={9} />
          <Tools w={41} items={["labelYellow", "diagram"]} />
          <Divider />
          <Tools w={41} items={["labelPin", "labelRed"]} />
          <Gap $w={1} />
          <Divider />
          <Tools w={41} items={["labelGreyPin", "labelGreyEye"]} />
          <More aria-label="More label tools">»</More>
          <Handle $w={9} />
          <Split name="curve" off />
          <Split name="circle" off />
          <Split name="ellipse" off />
          <Split name="rectangle" off />
          <Split name="polygon" off />
        </Toolbar>

        <Toolbar $strong $tall>
          <Handle $w={5} />
          <Tools w={144} items={["addVector", "addRaster", "addMesh", "addText", "addSpatialite", "addVirtual", "addPostgis"]} />
          <MenuButton aria-label="Database menu" />
          <Split name="addWms" />
          <Tools w={41} items={["addWcs", "addWfs"]} />
          <MenuButton aria-label="Feature service menu" />
          <Split name="newVector" />
          <Handle $w={9} />
          <Tools w={62} items={["magnet", "snapAll", "snapVertex"]} />
          <Spin w={62} label="Tolerance" value="12" muted />
          <Gap $w={1} />
          <Field $w={62} $muted>
            <Select aria-label="Units" defaultValue="px"><option>px</option></Select>
            <Caret $plain />
          </Field>
          <Tools w={62} items={["topology", "intersection", "tracing"]} />
          <MenuButton aria-label="Tracing menu" />
          <Gap $w={2} />
          <Handle $w={9} />
          <Tools w={41} items={["hammer", "mapGrey"]} />
        </Toolbar>

        <Body>
          <Docks>
            <Dock>
              <DockHeader title="Browser" />
              <DockTools>
                {["addItem", "refresh", "funnel", "collapse", "info"].map((n) => (
                  <SmallTool key={n} aria-label={n}><Icon name={n} size={10} /></SmallTool>
                ))}
              </DockTools>
              <TreeBox>
                <Tree role="tree">
                  {TREE.map((r) => (
                    <TreeRow key={r.t} role="treeitem" $indent={r.indent} $selected={r.selected} aria-selected={!!r.selected}>
                      <Twisty $state={r.state} />
                      <IconCell $wide={r.wide}><Icon name={r.icon} size={r.wide ? 11 : 9} /></IconCell>
                      {r.t}
                    </TreeRow>
                  ))}
                </Tree>
                <VScroll>
                  <ScrollArrow $dir="up" aria-label="Scroll up" />
                  <Track $grow={21} />
                  <Track $grow={28} $thumb />
                  <Track $grow={59} />
                  <ScrollArrow $dir="down" aria-label="Scroll down" />
                </VScroll>
                <HScroll>
                  <ScrollArrow $dir="left" aria-label="Scroll left" />
                  <HThumb />
                  <ScrollArrow $dir="right" aria-label="Scroll right" />
                  <Gap $w={8} />
                </HScroll>
              </TreeBox>
            </Dock>
            <Splitter />
            <Dock $grow>
              <DockHeader title="Layers" />
              <DockTools>
                {["brush", "addGroup", "eye", "funnel", "expression"].map((n) => (
                  <SmallTool key={n} aria-label={n}><Icon name={n} size={10} /></SmallTool>
                ))}
                <MenuButton aria-label="Filter by expression menu" />
                {["expand", "collapse", "remove"].map((n) => (
                  <SmallTool key={n} aria-label={n}><Icon name={n} size={10} /></SmallTool>
                ))}
              </DockTools>
              <LayerList>
                <LayerRow>
                  <LayerLabel>
                    <CheckBox type="checkbox" defaultChecked />
                    <Swatch />
                    <LayerName>TOWNSSURVEY_POLYM</LayerName>
                  </LayerLabel>
                </LayerRow>
              </LayerList>
            </Dock>
          </Docks>
          <Canvas><TownMap /></Canvas>
        </Body>

        <StatusBar>
          <Locator>
            <Icon name="search" size={8} />
            <TextInput placeholder="Type to locate (⌘K)" aria-label="Locate" />
          </Locator>
          <Caption $w={68} htmlFor="coord">Coordinate</Caption>
          <Field $w={63}><TextInput id="coord" $center defaultValue="258501,998197" /></Field>
          <StatusButton $w={18} aria-label="Toggle extents"><Icon name="extents" size={10} /></StatusButton>
          <Caption $w={24} htmlFor="scale">Scale</Caption>
          <Field $w={58}>
            <Select id="scale" defaultValue="1:1623117"><option>1:1623117</option></Select>
            <Caret />
          </Field>
          <StatusButton $w={20} aria-label="Lock scale"><Icon name="lock" size={9} /></StatusButton>
          <Caption as="span" $w={34}>Magnifier</Caption>
          <Spin w={60} label="Magnifier" value="100%" />
          <Caption as="span" $w={38}>Rotation</Caption>
          <Spin w={57} label="Rotation" value="0.0 °" />
          <CheckLabel><CheckBox type="checkbox" defaultChecked />Render</CheckLabel>
          <Gap $w={8} />
          <StatusButton $w={56}><Icon name="globeGrey" size={9} />EPSG:26986</StatusButton>
          <Gap $w={12} />
          <StatusButton $w={12} aria-label="Messages"><Icon name="bubble" size={11} /></StatusButton>
        </StatusBar>
      </Window>
    </>
  );
}
